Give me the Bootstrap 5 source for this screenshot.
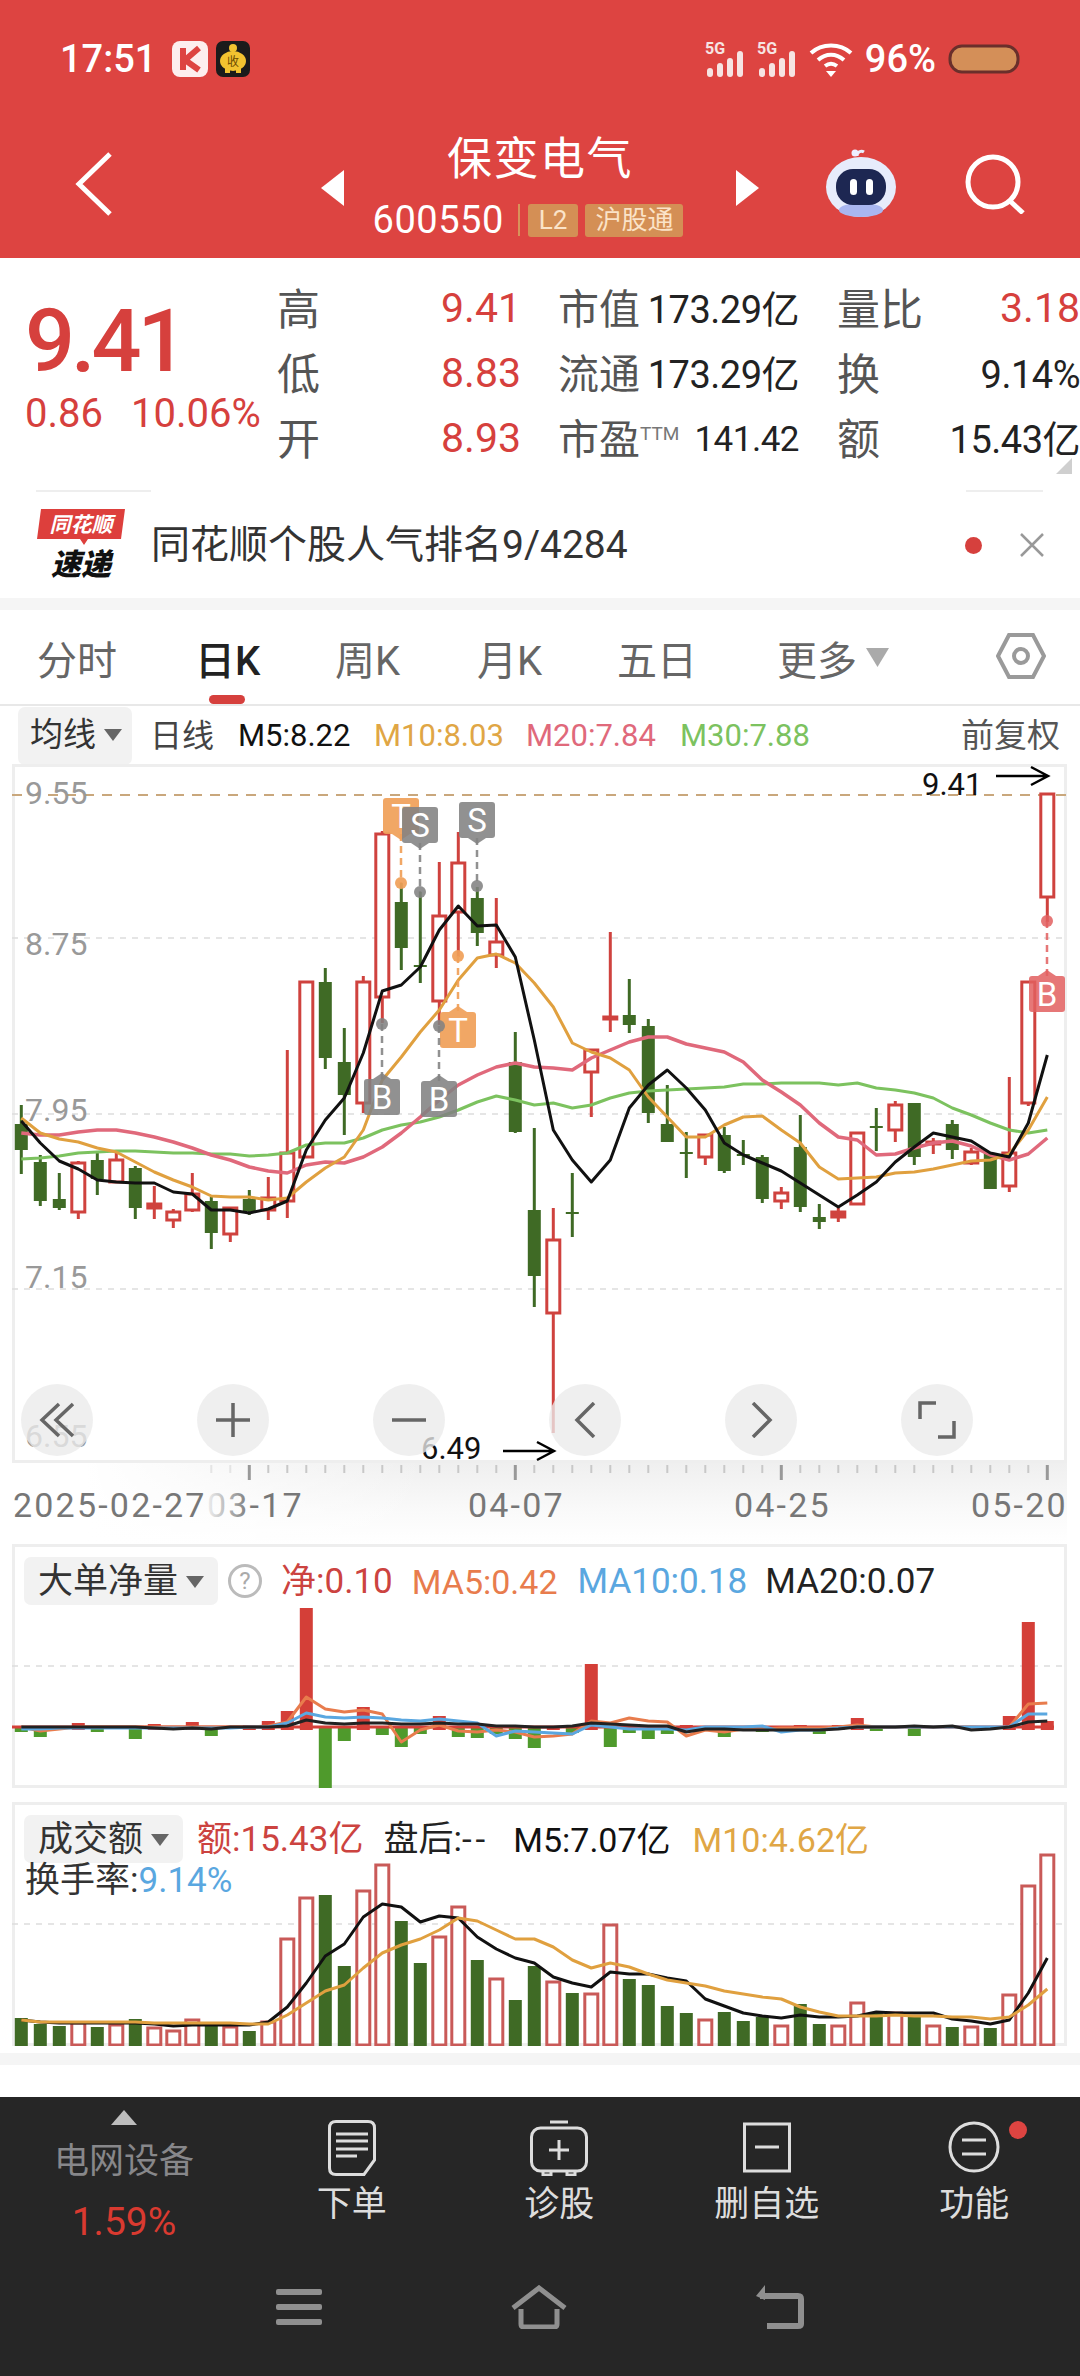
<!DOCTYPE html>
<html lang="zh-CN">
<head>
  <meta charset="UTF-8" />
  <meta name="viewport" content="width=device-width, initial-scale=1.0" />
  <title>保变电气</title>
  <link href="https://cdn.jsdelivr.net/npm/bootstrap@5.3.0/dist/css/bootstrap.min.css" rel="stylesheet">
  <style>
    html, body { margin: 0; background: #fff; }
    body {
      width: 1080px;
      height: 2376px;
      overflow: hidden;
      font-family: Roboto, "Noto Sans CJK SC", sans-serif;
    }
    svg { display: block; }
    svg text { font-family: Roboto, "Noto Sans CJK SC", sans-serif; }

    .top-red { background: #dd4441; color: #fff; height: 258px; }
    .status-row { height: 118px; padding: 0 60px 0 60px; }
    .status-time { font-size: 38px; font-weight: 500; margin-right: 16px; width: 96px; }
    .status-pct { font-size: 38px; font-weight: 500; margin: 0 12px 0 12px; }
    .title-row { height: 140px; }
    .title-side { flex: 1 1 0; }
    .title-mid { width: 390px; }
    .back-icon { margin: 33px 0 0 74px; }
    .side-tri { margin-top: 52px; }
    .stock-name { font-size: 45px; line-height: 54px; letter-spacing: 1.5px; margin-top: 15px; }
    .stock-code { font-size: 38px; line-height: 34px; letter-spacing: .5px; }
    .code-line { margin-top: 16px; padding-right: 24px; }
    .code-sep { width: 2px; height: 32px; background: #d8925a; margin: 0 8px 0 14px; }
    .tag-box { background: #d48f55; color: #fbe3c8; font-size: 26px; line-height: 33px; height: 33px; border-radius: 3px; padding: 0 11px; margin-right: 7px; }
    .tag-wide { padding: 0 10px; margin-right: 0; }

    .quote-block { height: 232px; padding: 20px 0 0 25px; }
    .price-col { width: 255px; color: #d6403d; }
    .price-big { font-size: 88px; line-height: 90px; letter-spacing: -4px; font-weight: 500; margin-top: 18px; }
    .price-sub { font-size: 40px; line-height: 44px; margin-top: 6px; white-space: nowrap; }
    .price-sub span + span { margin-left: 28px; }
    .q-row { height: 65px; font-size: 38px; color: #222; }
    .q-lab { color: #555; font-size: 43px; }
    .q-lab-sm { color: #555; font-size: 41px; }
    .q-w1 { width: 244px; }
    .q-w2 { width: 241px; margin-left: 37px; }
    .q-w3 { width: 243px; margin-left: 38px; }
    .q-up { color: #d6403d; font-size: 41px; }
    .q-val { font-size: 38px; white-space: nowrap; letter-spacing: -.5px; }
    .q-val-sm { font-size: 35px; }
    .ttm { font-size: 19px; color: #777; vertical-align: 14px; }
    .corner-mark { position: absolute; right: 8px; bottom: 16px; }

    .line-bits { height: 2px; background: linear-gradient(to right, transparent 3.3%, #eee 3.3%, #eee 14%, transparent 14%, transparent 89.4%, #eee 89.4%, #eee 96.6%, transparent 96.6%); }
    .news-row { height: 106px; padding: 0 36px; }
    .news-logo { width: 90px; margin-right: 25px; }
    .news-text { font-size: 39px; color: #333; }
    .news-dot { width: 17px; height: 17px; background: #d6403d; border-radius: 50%; margin-right: 38px; }
    .grey-band { height: 12px; background: #f5f5f5; }

    .tab-row { height: 96px; border-bottom: 2px solid #e8e8e8; position: relative; }
    .tab-item { position: absolute; top: 25px; font-size: 40px; line-height: 54px; color: #666; }
    .tab-on { color: #222; font-weight: 500; }
    .tab-bar { position: absolute; left: 209px; bottom: 0; width: 36px; height: 9px; background: #d6403d; border-radius: 5px; }
    .legend-row { height: 58px; font-size: 31px; padding: 2px 20px 0 18px; white-space: nowrap; }
    .pick-btn { background: #f2f2f2; border-radius: 7px; color: #333; }
    .tri-dn { display: inline-block; width: 0; height: 0; border-left: 9px solid transparent; border-right: 9px solid transparent; border-top: 12px solid #666; }
    .leg-k { width: 88px; margin-left: 18px; color: #444; font-size: 32px; }
    .leg-a { width: 136px; color: #111; }
    .leg-b { width: 152px; }
    .leg-c { width: 154px; }
    .c-orange { color: #e0a645; }
    .c-pink { color: #e0697b; }
    .c-green { color: #7cc25f; }
    .c-red { color: #cc4340; }
    .c-coral { color: #e87c4d; }
    .c-blue { color: #5aa7e0; }
    .c-ink { color: #222; }

    .chart-box { position: relative; width: 1055px; height: 699px; margin-left: 12px; box-shadow: inset 0 0 0 3px #eee; overflow: hidden; }
    .round-row { position: absolute; left: 9px; bottom: 7px; gap: 104px; }
    .round-btn { width: 72px; height: 72px; background: rgba(234,234,234,.78); }
    .axis-wrap { height: 81px; background: linear-gradient(to right, #fff 8%, rgba(255,255,255,0) 40%), linear-gradient(to bottom, #efefef, #fafafa 60%, #fff); margin: 0 13px 0 0; }

    .sub-panel { position: relative; width: 1055px; height: 244px; margin-left: 12px; box-shadow: inset 0 0 0 3px #eee; }
    .sub-head { position: absolute; left: 12px; top: 11px; font-size: 35px; line-height: 48px; white-space: nowrap; }
    .sub-head > span, .sub-head > div > span { padding-top: 3px; }
    .sub-pick { background: #f2f2f2; border-radius: 7px; height: 48px; padding: 0 14px; color: #333; }
    .sub-line2 { font-size: 35px; line-height: 40px; margin: -3px 0 0 1px; color: #333; }
    .help-ring { width: 34px; height: 34px; border: 3px solid #bbb; border-radius: 50%; color: #aaa; font-size: 24px; line-height: 28px; text-align: center; margin: 0 19px 0 10px; padding-top: 0 !important; }
    .wide-dash { letter-spacing: 4px; }

    .foot-dark { background: #262626; height: 279px; position: relative; }
    .foot-row { height: 168px; }
    .foot-first { width: 248px; padding-top: 13px; }
    .foot-sector { font-size: 35px; line-height: 44px; color: #87878a; margin-top: 15px; }
    .foot-rate { font-size: 39px; line-height: 44px; color: #d93a30; margin-top: 16px; }
    .foot-item { width: 207.5px; padding-top: 23px; color: #ddd; font-size: 35px; line-height: 44px; }
    .foot-item svg { margin-bottom: 7px; }
    .alert-dot { position: absolute; left: 1009px; top: 24px; width: 18px; height: 18px; background: #dd4441; border-radius: 50%; }
    .sys-row { height: 111px; padding-bottom: 28px; gap: 188px; }
  </style>
</head>
<body>

<div class="top-red">
  <div class="status-row d-flex align-items-center">
    <span class="status-time">17:51</span>
    <svg width="36" height="36" viewBox="0 0 36 36"><rect width="36" height="36" rx="8" fill="#fdeeee"/><path d="M11 7v22M27 7L13 19l14 10" fill="none" stroke="#dd4441" stroke-width="6"/></svg>
    <svg class="ms-2" width="34" height="36" viewBox="0 0 34 36"><rect width="34" height="36" rx="7" fill="#1b1b1b"/><ellipse cx="17" cy="20" rx="13" ry="10" fill="#f2c230"/><circle cx="17" cy="7" r="4" fill="#f2c230"/><rect x="9" y="27" width="5" height="5" fill="#f2c230"/><rect x="20" y="27" width="5" height="5" fill="#f2c230"/><text x="17" y="25" font-size="12" text-anchor="middle" fill="#6b4a00">收</text></svg>
    <div class="ms-auto d-flex align-items-center">
      <svg width="96" height="40" viewBox="0 0 96 40" fill="#f6e4e3"><text x="0" y="15" font-size="16" font-weight="700">5G</text><rect x="2" y="29" width="6" height="9" rx="3"/><rect x="12" y="24" width="6" height="14" rx="3"/><rect x="22" y="19" width="6" height="19" rx="3"/><rect x="32" y="12" width="6" height="26" rx="3"/><text x="52" y="15" font-size="16" font-weight="700">5G</text><rect x="54" y="29" width="6" height="9" rx="3"/><rect x="64" y="24" width="6" height="14" rx="3"/><rect x="74" y="19" width="6" height="19" rx="3"/><rect x="84" y="12" width="6" height="26" rx="3"/></svg>
      <svg class="ms-2" width="44" height="36" viewBox="0 0 44 36" fill="none" stroke="#fff" stroke-width="4"><path d="M2 12c11-10 29-10 40 0"/><path d="M9 19c8-7 18-7 26 0"/><path d="M16 25c4-3 8-3 12 0"/><path d="M22 36l-5-6h10z" fill="#fff" stroke="none"/></svg>
      <span class="status-pct">96%</span>
      <svg width="72" height="30" viewBox="0 0 72 30"><rect x="2" y="2" width="68" height="26" rx="12" fill="#d48f58" stroke="#6a2f2b" stroke-width="3"/></svg>
    </div>
  </div>
  <div class="title-row d-flex">
    <div class="title-side d-flex">
      <svg class="back-icon" width="40" height="66" viewBox="0 0 40 66" fill="none" stroke="#fff" stroke-width="5"><path d="M36 3L5 33l31 30"/></svg>
    </div>
    <svg class="side-tri" width="24" height="36" viewBox="0 0 24 36"><path d="M23 0v36L0 18z" fill="#fff"/></svg>
    <div class="title-mid d-flex flex-column align-items-center">
      <div class="stock-name">保变电气</div>
      <div class="code-line d-flex align-items-center">
        <span class="stock-code">600550</span>
        <span class="code-sep"></span>
        <span class="tag-box">L2</span>
        <span class="tag-box tag-wide">沪股通</span>
      </div>
    </div>
    <svg class="side-tri" width="24" height="36" viewBox="0 0 24 36"><path d="M1 0v36l23-18z" fill="#fff"/></svg>
    <div class="title-side d-flex justify-content-end">
      <svg style="margin-top:30px" width="74" height="70" viewBox="0 0 74 70"><path d="M33 8c0-4 4-6 7-4" fill="none" stroke="#e9eefc" stroke-width="3"/><circle cx="31" cy="5" r="3.5" fill="#eef"/><ellipse cx="37" cy="39" rx="35" ry="30" fill="#e7ecfb"/><ellipse cx="37" cy="62" rx="22" ry="7" fill="#a9b6f0"/><rect x="12" y="21" width="50" height="36" rx="17" fill="#1d2752"/><rect x="26" y="31" width="7" height="16" rx="3.5" fill="#fff"/><rect x="42" y="31" width="7" height="16" rx="3.5" fill="#fff"/></svg>
      <svg style="margin:36px 55px 0 67px" width="60" height="60" viewBox="0 0 60 60" fill="none" stroke="#fff" stroke-width="5"><circle cx="28" cy="28" r="25"/><path d="M45 47l13 12"/></svg>
    </div>
  </div>
</div>

<div class="quote-block d-flex position-relative">
  <div class="price-col">
    <div class="price-big">9.41</div>
    <div class="price-sub"><span>0.86</span><span>10.06%</span></div>
  </div>
  <div>
    <div class="q-row d-flex align-items-center">
      <div class="q-w1 d-flex justify-content-between"><span class="q-lab">高</span><span class="q-up">9.41</span></div>
      <div class="q-w2 d-flex justify-content-between align-items-center"><span class="q-lab-sm">市值</span><span class="q-val">173.29亿</span></div>
      <div class="q-w3 d-flex justify-content-between"><span class="q-lab">量比</span><span class="q-up">3.18</span></div>
    </div>
    <div class="q-row d-flex align-items-center">
      <div class="q-w1 d-flex justify-content-between"><span class="q-lab">低</span><span class="q-up">8.83</span></div>
      <div class="q-w2 d-flex justify-content-between align-items-center"><span class="q-lab-sm">流通</span><span class="q-val">173.29亿</span></div>
      <div class="q-w3 d-flex justify-content-between align-items-center"><span class="q-lab">换</span><span class="q-val">9.14%</span></div>
    </div>
    <div class="q-row d-flex align-items-center">
      <div class="q-w1 d-flex justify-content-between"><span class="q-lab">开</span><span class="q-up">8.93</span></div>
      <div class="q-w2 d-flex justify-content-between align-items-center"><span class="q-lab-sm">市盈<span class="ttm">TTM</span></span><span class="q-val q-val-sm">141.42</span></div>
      <div class="q-w3 d-flex justify-content-between align-items-center"><span class="q-lab">额</span><span class="q-val">15.43亿</span></div>
    </div>
  </div>
  <svg class="corner-mark" width="16" height="16" viewBox="0 0 16 16"><path d="M16 0v16H0z" fill="#cfcfcf"/></svg>
</div>
<div class="line-bits"></div>

<div class="news-row d-flex align-items-center">
  <svg class="news-logo" height="72" viewBox="0 0 90 72">
    <path d="M5 0h84l-4 30H52l-4 6-4-6H1z" fill="#dd3f3c"/>
    <text x="45" y="23" font-size="21" font-weight="700" font-style="italic" text-anchor="middle" fill="#fff">同花顺</text>
    <text x="45" y="66" font-size="30" font-weight="900" font-style="italic" text-anchor="middle" fill="#111">速递</text>
  </svg>
  <span class="news-text">同花顺个股人气排名9/4284</span>
  <span class="news-dot ms-auto"></span>
  <svg width="24" height="24" viewBox="0 0 24 24" fill="none" stroke="#999" stroke-width="2.5"><path d="M1 1l22 22M23 1L1 23"/></svg>
</div>
<div class="grey-band"></div>

<div class="tab-row">
  <span class="tab-item" style="left:37px">分时</span>
  <span class="tab-item tab-on" style="left:195px">日K</span>
  <span class="tab-item" style="left:335px">周K</span>
  <span class="tab-item" style="left:477px">月K</span>
  <span class="tab-item" style="left:617px">五日</span>
  <span class="tab-item" style="left:777px">更多</span>
  <svg class="position-absolute" style="left:866px;top:38px" width="23" height="19" viewBox="0 0 23 19"><path d="M0 0h23L11.5 19z" fill="#aaa"/></svg>
  <svg class="position-absolute" style="left:996px;top:23px" width="50" height="46" viewBox="0 0 50 46" fill="none" stroke="#9a9a9a" stroke-width="4"><path d="M13 2h24l11 21-11 21H13L2 23z"/><circle cx="25" cy="23" r="7"/></svg>
  <span class="tab-bar"></span>
</div>

<div class="legend-row d-flex align-items-center">
  <span class="pick-btn d-flex align-items-center" style="padding:3px 14px 5px 12px;width:114px;font-size:33px">均线<i class="tri-dn ms-2"></i></span>
  <span class="leg-k">日线</span>
  <span class="leg-a">M5:8.22</span>
  <span class="leg-b c-orange">M10:8.03</span>
  <span class="leg-c c-pink">M20:7.84</span>
  <span class="c-green">M30:7.88</span>
  <span class="ms-auto" style="color:#555;font-size:33px">前复权</span>
</div>

<div class="chart-box">
  <svg id="kChart" width="1055" height="699" viewBox="12 764 1055 699"></svg>
  <div class="round-row d-flex">
    <button class="btn round-btn rounded-circle p-0 border-0 d-flex align-items-center justify-content-center"><svg width="36" height="36" viewBox="0 0 36 36" fill="none" stroke="#666" stroke-width="3.5"><path d="M20 2L3 18l17 16M34 2L17 18l17 16"/></svg></button>
    <button class="btn round-btn rounded-circle p-0 border-0 d-flex align-items-center justify-content-center"><svg width="36" height="36" viewBox="0 0 36 36" fill="none" stroke="#666" stroke-width="3.5"><path d="M1 18h34M18 1v34"/></svg></button>
    <button class="btn round-btn rounded-circle p-0 border-0 d-flex align-items-center justify-content-center"><svg width="36" height="36" viewBox="0 0 36 36" fill="none" stroke="#666" stroke-width="3.5"><path d="M1 18h34"/></svg></button>
    <button class="btn round-btn rounded-circle p-0 border-0 d-flex align-items-center justify-content-center"><svg width="36" height="36" viewBox="0 0 36 36" fill="none" stroke="#666" stroke-width="3.5"><path d="M27 1L10 18l17 17"/></svg></button>
    <button class="btn round-btn rounded-circle p-0 border-0 d-flex align-items-center justify-content-center"><svg width="36" height="36" viewBox="0 0 36 36" fill="none" stroke="#666" stroke-width="3.5"><path d="M10 1l17 17-17 17"/></svg></button>
    <button class="btn round-btn rounded-circle p-0 border-0 d-flex align-items-center justify-content-center"><svg width="38" height="38" viewBox="0 0 38 38" fill="none" stroke="#666" stroke-width="3.5"><path d="M2 18V2h16M36 20v16H20"/></svg></button>
  </div>
</div>

<div class="axis-wrap">
  <svg id="axisChart" width="1067" height="81" viewBox="0 1463 1067 81"></svg>
</div>

<div class="sub-panel">
  <svg id="flowChart" width="1055" height="244" viewBox="12 1544 1055 244"></svg>
  <div class="sub-head d-flex align-items-center">
    <span class="sub-pick d-flex align-items-center">大单净量<i class="tri-dn ms-2"></i></span>
    <span class="help-ring">?</span>
    <span class="c-red">净:0.10</span>
    <span class="c-coral" style="margin-left:19px;font-size:34px">MA5:0.42</span>
    <span class="c-blue" style="margin-left:20px;font-size:35px">MA10:0.18</span>
    <span class="c-ink" style="margin-left:18px;font-size:35px">MA20:0.07</span>
  </div>
</div>
<div style="height:14px"></div>
<div class="sub-panel">
  <svg id="amountChart" width="1055" height="244" viewBox="12 1802 1055 244"></svg>
  <div class="sub-head">
    <div class="d-flex align-items-center">
      <span class="sub-pick d-flex align-items-center">成交额<i class="tri-dn ms-2"></i></span>
      <span class="c-red" style="margin-left:14px">额:15.43亿</span>
      <span class="c-ink" style="margin-left:20px">盘后:<span class="wide-dash">--</span></span>
      <span style="margin-left:24px;color:#111;font-size:34px">M5:7.07亿</span>
      <span class="c-orange" style="margin-left:22px;font-size:34px">M10:4.62亿</span>
    </div>
    <div class="sub-line2">换手率:<span class="c-blue">9.14%</span></div>
  </div>
</div>
<div style="height:7px"></div>
<div class="grey-band"></div>
<div style="height:32px"></div>

<div class="foot-dark">
  <div class="foot-row d-flex">
    <div class="foot-first d-flex flex-column align-items-center">
      <svg width="26" height="15" viewBox="0 0 26 15"><path d="M13 0l13 15H0z" fill="#bdbdbd"/></svg>
      <div class="foot-sector">电网设备</div>
      <div class="foot-rate">1.59%</div>
    </div>
    <div class="foot-item d-flex flex-column align-items-center">
      <svg width="48" height="56" viewBox="0 0 48 56" fill="none" stroke="#ddd" stroke-width="3"><path d="M8 1.5h32q6.500 0 6.500 6.500v32L36 54.500H8q-6.500 0-6.500-6.500V8q0-6.500 6.500-6.500z"/><path d="M8 14h32M8 21h32M8 29h32M8 36h21"/></svg>
      <span>下单</span>
    </div>
    <div class="foot-item d-flex flex-column align-items-center">
      <svg width="58" height="56" viewBox="0 0 58 56" fill="none" stroke="#ddd" stroke-width="3"><path d="M20 2h18"/><rect x="1.5" y="8" width="55" height="43" rx="9"/><path d="M29 20v20M19 30h20"/><path d="M13 51v4h8v-4M37 51v4h8v-4"/></svg>
      <span>诊股</span>
    </div>
    <div class="foot-item d-flex flex-column align-items-center">
      <svg width="48" height="56" viewBox="0 0 48 56" fill="none" stroke="#ddd" stroke-width="3"><rect x="1.5" y="4" width="45" height="47"/><path d="M12 27h24"/></svg>
      <span>删自选</span>
    </div>
    <div class="foot-item d-flex flex-column align-items-center">
      <svg width="52" height="56" viewBox="0 0 52 56" fill="none" stroke="#ddd" stroke-width="3"><circle cx="26" cy="27" r="24"/><path d="M14 20h24M14 34h24"/></svg>
      <span>功能</span>
    </div>
  </div>
  <span class="alert-dot"></span>
  <div class="sys-row d-flex justify-content-center align-items-center">
    <svg width="46" height="36" viewBox="0 0 46 36" fill="#8f8f8f"><rect width="46" height="6" rx="2"/><rect y="15" width="46" height="6" rx="2"/><rect y="30" width="46" height="6" rx="2"/></svg>
    <svg width="58" height="44" viewBox="0 0 58 44" fill="none" stroke="#8f8f8f" stroke-width="5"><path d="M3 23L29 3l26 20"/><path d="M11 24v15q0 3 3 3h30q3 0 3-3V24"/></svg>
    <svg width="48" height="44" viewBox="0 0 48 44" fill="none" stroke="#8f8f8f" stroke-width="6"><path d="M4 11h38q3 0 3 3v25q0 2-3 2H11"/><path d="M0 11L9 0v15z" fill="#8f8f8f" stroke="none"/></svg>
  </div>
</div>

<script>
const RED = '#cf423e', GRN = '#3f6a25';
const xAt = i => 21.3 + 19 * i;

// up, high, top, bottom, low
const candles = [
  [0,1105,1124,1150,1174],[0,1155,1162,1201,1206],[0,1173,1199,1208,1210],[1,1161,1163,1212,1219],[0,1153,1160,1179,1195],
  [1,1153,1160,1182,1183],[0,1166,1168,1208,1219],[1,1186,1204,1208,1219],[1,1209,1212,1220,1228],[1,1173,1194,1210,1212],
  [0,1197,1201,1233,1249],[1,1207,1208,1234,1242],[0,1190,1199,1211,1215],[1,1177,1198,1210,1220],[1,1050,1153,1201,1218],
  [1,982,982,1157,1157],[0,968,982,1058,1069],[0,1028,1062,1095,1135],[1,976,982,1103,1113],[1,831,834,997,1023],
  [0,883,902,948,970],[0,892,965,967,983],[1,862,916,1001,1025],[1,832,863,912,957],[0,887,898,933,946],
  [1,898,942,955,968],[0,1032,1062,1132,1133],[0,1128,1210,1276,1307],[1,1208,1240,1313,1433],[0,1173,1212,1214,1237],
  [1,1050,1050,1072,1117],[1,932,1017,1019,1032],[0,979,1015,1025,1033],[0,1019,1026,1113,1123],[0,1085,1124,1142,1142],
  [0,1132,1152,1154,1178],[1,1135,1135,1157,1165],[0,1127,1135,1171,1173],[0,1140,1154,1156,1165],[0,1155,1157,1199,1203],
  [1,1187,1193,1201,1209],[0,1115,1147,1207,1212],[0,1204,1217,1222,1229],[1,1208,1212,1217,1222],[1,1132,1133,1204,1205],
  [0,1108,1126,1128,1151],[1,1101,1105,1130,1142],[0,1103,1103,1157,1165],[1,1138,1142,1144,1154],[0,1120,1124,1150,1159],
  [1,1148,1152,1163,1165],[0,1153,1153,1189,1189],[1,1077,1153,1186,1192],[1,982,982,1103,1106],[1,794,794,897,922]
];

const ma5 = [1121,1143,1161,1169,1180,1182,1183,1183,1192,1194,1210,1210,1213,1209,1201,1150,1120,1098,1053,991,985,967,930,906,926,925,957,1040,1130,1160,1182,1160,1108,1085,1070,1088,1110,1143,1155,1163,1171,1183,1195,1207,1195,1182,1162,1147,1133,1137,1141,1153,1157,1123,1055];
const ma10 = [1118,1133,1139,1142,1148,1152,1162,1172,1180,1187,1196,1197,1197,1200,1198,1182,1168,1157,1130,1080,1057,1032,1010,980,958,954,963,983,1007,1043,1052,1058,1070,1097,1117,1137,1137,1125,1117,1116,1130,1143,1167,1179,1178,1177,1173,1172,1169,1165,1161,1160,1154,1130,1097];
const ma20 = [1133,1135,1135,1132,1130,1130,1133,1137,1142,1148,1155,1160,1167,1171,1173,1165,1162,1163,1157,1147,1133,1117,1100,1085,1075,1067,1063,1067,1068,1070,1058,1050,1042,1037,1037,1044,1048,1052,1062,1080,1092,1105,1123,1137,1140,1155,1154,1148,1143,1141,1146,1155,1160,1154,1138];
const ma30 = [1159,1158,1156,1153,1152,1151,1151,1152,1153,1153,1154,1154,1156,1155,1153,1145,1143,1143,1138,1130,1125,1122,1117,1110,1102,1096,1100,1105,1103,1108,1105,1098,1093,1091,1090,1089,1088,1087,1084,1084,1083,1083,1083,1085,1083,1088,1090,1093,1098,1108,1115,1123,1130,1133,1130];

const flowBars = [1732,1737,1727,1723,1732,1727,1739,1724,1727,1722,1736,1727,1725,1721,1711,1608,1788,1741,1707,1735,1747,1734,1716,1737,1738,1734,1739,1748,1726,1733,1664,1747,1733,1739,1734,1725,1727,1737,1727,1732,1727,1725,1734,1725,1718,1731,1727,1736,1727,1727,1727,1727,1716,1622,1721];
const flowA = [1727,1731,1729,1727,1727,1727,1727,1727,1727,1727,1727,1727,1727,1726,1722,1697,1709,1712,1710,1714,1742,1730,1725,1731,1732,1730,1732,1737,1736,1734,1721,1723,1718,1721,1722,1736,1730,1732,1729,1729,1728,1728,1728,1727,1725,1727,1727,1727,1727,1727,1727,1728,1727,1704,1703];
const flowB = [1729,1729,1728,1728,1728,1728,1728,1728,1728,1728,1728,1728,1727,1727,1723,1713,1717,1718,1717,1718,1720,1721,1719,1721,1723,1736,1731,1732,1733,1734,1725,1727,1729,1729,1729,1730,1727,1727,1727,1726,1732,1730,1730,1728,1727,1727,1727,1727,1727,1727,1727,1727,1727,1714,1714];
const flowC = [1727,1727,1727,1727,1727,1727,1727,1728,1729,1728,1729,1727,1727,1727,1726,1720,1723,1724,1723,1723,1724,1724,1723,1724,1724,1726,1726,1727,1727,1726,1723,1724,1725,1726,1726,1732,1729,1729,1730,1730,1730,1730,1730,1729,1727,1727,1727,1726,1727,1726,1730,1729,1727,1722,1721];

const amtUp = [0,0,0,1,0,1,0,1,1,1,0,1,0,1,1,1,0,0,1,1,0,0,1,1,0,1,0,0,1,0,1,1,0,0,0,0,1,0,0,0,1,0,0,1,1,0,1,0,1,0,1,0,1,1,1];
const amtTop = [2018,2024,2026,2023,2027,2025,2019,2028,2031,2020,2023,2027,2031,2022,1939,1898,1895,1966,1891,1865,1921,1963,1937,1907,1960,1979,2000,1966,1982,1993,1994,1925,1979,1985,2006,2013,2020,2012,2021,2017,2026,2004,2024,2026,2003,2013,2013,2017,2026,2027,2027,2028,1995,1886,1855];
const amtA = [2020,2022,2023,2023,2023,2023,2023,2024,2026,2025,2025,2025,2025,2022,2007,1983,1956,1944,1917,1904,1907,1922,1916,1918,1937,1949,1958,1963,1977,1983,1987,1972,1974,1974,1978,1981,1999,2006,2013,2016,2018,2015,2017,2017,2016,2012,2013,2013,2013,2019,2021,2024,2020,1993,1958];
const amtB = [2020,2022,2022,2022,2022,2022,2022,2023,2023,2023,2023,2023,2024,2024,2015,2003,1991,1985,1968,1953,1945,1939,1930,1918,1921,1930,1939,1939,1947,1960,1968,1963,1967,1974,1980,1983,1986,1991,1994,1997,1999,2007,2012,2016,2016,2016,2015,2016,2016,2017,2017,2019,2017,2005,1989];

function polyline(ys, color, width) {
  const pts = ys.map((y, i) => xAt(i).toFixed(1) + ',' + y).join(' ');
  return `<polyline points="${pts}" fill="none" stroke="${color}" stroke-width="${width}" stroke-linejoin="round"/>`;
}

function gridLine(y) {
  return `<line x1="12" x2="1066" y1="${y}" y2="${y}" stroke="#ddd" stroke-width="1.5" stroke-dasharray="6 6"/>`;
}

// T, S or B tag with a dashed stem going to a dot. below: dot is under the tag
function tag(x, y, letter, color, dotY, below) {
  const stemTop = below ? y + 36 : dotY;
  const stemBot = below ? dotY : y;
  const tip = below ? y + 42 : y - 6;
  const edge = below ? y + 36 : y;
  return `<line x1="${x}" x2="${x}" y1="${stemTop}" y2="${stemBot}" stroke="${color}" stroke-width="2.5" stroke-dasharray="7 5"/>` +
    `<circle cx="${x}" cy="${dotY}" r="6" fill="${color}"/>` +
    `<path d="M${x - 9} ${edge}L${x} ${tip}L${x + 9} ${edge}z" fill="${color}"/>` +
    `<rect x="${x - 18}" y="${y}" width="36" height="36" rx="3" fill="${color}"/>` +
    `<text x="${x}" y="${y + 30}" font-size="33" text-anchor="middle" fill="#fff">${letter}</text>`;
}

function arrow(x1, x2, y) {
  return `<path d="M${x1} ${y}H${x2}M${x2 - 17} ${y - 9}L${x2} ${y}L${x2 - 17} ${y + 9}" fill="none" stroke="#000" stroke-width="2.5"/>`;
}

function drawKChart() {
  let s = '';
  [938, 1114, 1289].forEach(y => { s += gridLine(y); });
  s += `<line x1="12" x2="1066" y1="795" y2="795" stroke="#c9a77c" stroke-width="2" stroke-dasharray="10 8"/>`;
  candles.forEach((c, i) => {
    const x = xAt(i), col = c[0] ? RED : GRN;
    s += `<line x1="${x}" x2="${x}" y1="${c[1]}" y2="${c[4]}" stroke="${col}" stroke-width="3"/>`;
    if (c[0]) {
      const tall = c[3] - c[2] > 6;
      s += `<rect x="${x - 6.5}" y="${c[2]}" width="13" height="${c[3] - c[2]}" fill="${tall ? '#fff' : col}" stroke="${col}" stroke-width="3"/>`;
    } else {
      s += `<rect x="${x - 6.5}" y="${c[2]}" width="13" height="${c[3] - c[2]}" fill="${col}"/>`;
    }
  });
  s += polyline(ma30, '#7cc25f', 3) + polyline(ma20, '#e0697b', 3.5) + polyline(ma10, '#e0a03f', 3) + polyline(ma5, '#111', 3);

  [['9.55', 804], ['8.75', 955], ['7.95', 1121], ['7.15', 1288], ['6.55', 1447]].forEach(l => {
    s += `<text x="25" y="${l[1]}" font-size="32" fill="#999">${l[0]}</text>`;
  });

  const orange = 'rgba(240,160,88,.92)', gray = 'rgba(130,130,130,.88)', pink = 'rgba(226,95,95,.85)';
  s += tag(401, 798, 'T', orange, 883, true);
  s += tag(420, 807, 'S', gray, 892, true);
  s += tag(477, 802, 'S', gray, 886, true);
  s += tag(458, 1012, 'T', orange, 956);
  s += tag(382, 1079, 'B', gray, 1024);
  s += tag(439, 1081, 'B', gray, 1026);
  s += tag(1047, 976, 'B', pink, 921);

  s += `<text x="922" y="795" font-size="31" fill="#111">9.41</text>` + arrow(996, 1048, 776);
  s += `<text x="421" y="1459" font-size="31" fill="#111">6.49</text>` + arrow(503, 554, 1451);
  document.getElementById('kChart').innerHTML = s;
}

function drawAxis() {
  let s = `<defs><linearGradient id="fadeDate" x1="0" x2="1" y1="0" y2="0"><stop offset="0" stop-color="#777" stop-opacity=".1"/><stop offset=".45" stop-color="#777"/></linearGradient></defs>`;
  for (let i = 10; i < 55; i++) {
    const big = i === 12 || i === 26 || i === 40 || i === 54;
    const x = xAt(i), op = i < 12 ? .4 : 1;
    s += `<line x1="${x}" x2="${x}" y1="1465" y2="${big ? 1480 : 1473}" stroke="${big ? '#999' : '#c8c8c8'}" stroke-width="${big ? 3 : 2}" opacity="${op}"/>`;
  }
  const dates = [['2025-02-27', 13, '#777'], ['03-17', 207, 'url(#fadeDate)'], ['04-07', 468, '#777'], ['04-25', 734, '#777'], ['05-20', 971, '#777']];
  dates.forEach(d => {
    s += `<text x="${d[1]}" y="1517" font-size="34" letter-spacing="2.2" fill="${d[2]}">${d[0]}</text>`;
  });
  document.getElementById('axisChart').innerHTML = s;
}

function drawFlow() {
  let s = gridLine(1666);
  flowBars.forEach((y, i) => {
    const x = xAt(i) - 6.5;
    if (y < 1727) s += `<rect x="${x}" y="${y}" width="13" height="${1730 - y}" fill="#d43f38"/>`;
    if (y > 1727) s += `<rect x="${x}" y="1727" width="13" height="${y - 1727}" fill="#4f9a2c"/>`;
  });
  s += `<line x1="12" x2="1054" y1="1727" y2="1727" stroke="#d43f38" stroke-width="3"/>`;
  s += polyline(flowA, '#e87c4d', 3) + polyline(flowB, '#5aa7e0', 3) + polyline(flowC, '#222', 3);
  document.getElementById('flowChart').innerHTML = s;
}

function drawAmount() {
  let s = gridLine(1924);
  amtTop.forEach((y, i) => {
    const x = xAt(i) - 6.5;
    s += amtUp[i]
      ? `<rect x="${x}" y="${y}" width="13" height="${2045 - y}" fill="#fff" stroke="#c95a58" stroke-width="3"/>`
      : `<rect x="${x}" y="${y}" width="13" height="${2047 - y}" fill="${GRN}"/>`;
  });
  s += polyline(amtA, '#111', 3) + polyline(amtB, '#e0a03f', 3);
  document.getElementById('amountChart').innerHTML = s;
}

drawKChart();
drawAxis();
drawFlow();
drawAmount();
</script>
<script src="https://cdn.jsdelivr.net/npm/bootstrap@5.3.0/dist/js/bootstrap.bundle.min.js"></script>
</body>
</html>
